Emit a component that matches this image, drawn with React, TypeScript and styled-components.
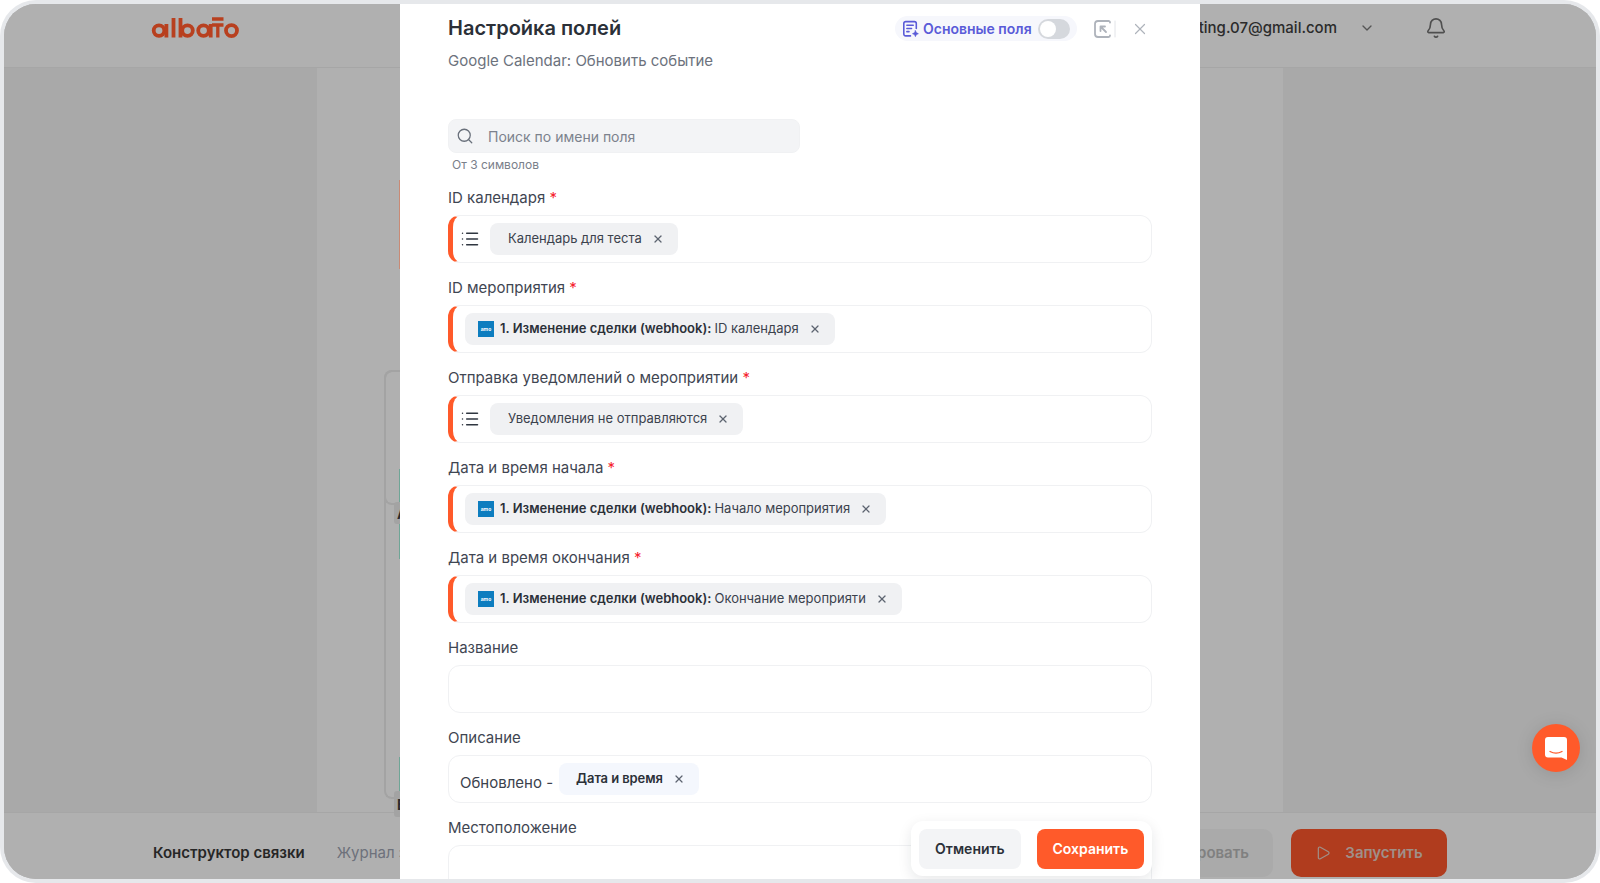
import React from "react";
import styled, { createGlobalStyle } from "styled-components";
import { Bell, ChevronDown, List, Play, Search, X } from "lucide-react";

const Global = createGlobalStyle`
  html, body { margin: 0; padding: 0; background: #fff; overflow: hidden; }
  * { box-sizing: border-box; }
  body { font-family: Inter, "Noto Sans", "Liberation Sans", sans-serif; }
`;

const Frame = styled.div`
  width: 1600px;
  height: 883px;
  padding: 4px;
  background: #e6e8eb;
  border-radius: 36px;
`;
const Screen = styled.div`
  position: relative;
  height: 875px;
  border-radius: 32px;
  overflow: hidden;
  background: #b0b0b0;
  display: flex;
  flex-direction: column;
`;
const TopBar = styled.header`
  height: 64px;
  flex: none;
  display: flex;
  align-items: center;
  justify-content: space-between;
  padding: 0 149px 16px 146px;
  border-bottom: 1px solid #a6a6a6;
  background: #b0b0b0;
`;
const UserBlock = styled.div`
  display: flex;
  align-items: center;
  color: #2b2b2b;
  font-size: 15px;
  font-weight: 500;
`;
const Chevron = styled(ChevronDown)`
  margin-left: 22px;
  color: #555;
`;
const BellIcon = styled(Bell)`
  margin-left: 50px;
  color: #4f4f4f;
`;
const Canvas = styled.main`
  flex: 1;
  display: flex;
`;
const SidePanel = styled.div`
  width: 313px;
  flex: none;
  background: #a9a9a9;
`;
const CenterPanel = styled.div`
  position: relative;
  flex: 1;
  background: #b0b0b0;
`;
const Connector = styled.div<{ $top: number; $height: number }>`
  position: absolute;
  left: 67px;
  top: ${(p) => p.$top}px;
  width: 30px;
  height: ${(p) => p.$height}px;
  border: 2px solid #a3a3a3;
  border-right: 0;
  border-radius: 8px 0 0 8px;
`;
const NodeTag = styled.div<{ $top: number; $height: number }>`
  position: absolute;
  left: 77px;
  top: ${(p) => p.$top}px;
  width: 20px;
  height: ${(p) => p.$height}px;
  padding-left: 3px;
  display: flex;
  align-items: center;
  background: #a3a3a3;
  border-radius: 3px 0 0 3px;
  color: #2b2b2b;
  font-size: 14px;
  font-weight: 700;
`;
const Edge = styled.div<{ $top: number; $height: number; $color: string }>`
  position: absolute;
  left: 82px;
  width: 1px;
  top: ${(p) => p.$top}px;
  height: ${(p) => p.$height}px;
  background: ${(p) => p.$color};
`;
const BottomBar = styled.footer`
  height: 67px;
  flex: none;
  display: flex;
  align-items: center;
  justify-content: space-between;
  padding: 13px 149px 0 149px;
  border-top: 1px solid #a6a6a6;
  background: #b0b0b0;
`;
const Tabs = styled.nav`
  display: flex;
  gap: 32px;
  font-size: 15px;
`;
const Tab = styled.span<{ $active?: boolean }>`
  color: ${(p) => (p.$active ? "#262626" : "#6d717b")};
  font-weight: ${(p) => (p.$active ? 600 : 400)};
`;
const BarActions = styled.div`
  display: flex;
  gap: 18px;
`;
const GhostButton = styled.div`
  height: 48px;
  width: 180px;
  display: flex;
  align-items: center;
  justify-content: flex-end;
  padding-right: 24px;
  border-radius: 10px;
  background: #aaaaaa;
  color: #808080;
  font-size: 15px;
  font-weight: 600;
`;
const RunButton = styled.div`
  height: 48px;
  width: 156px;
  display: flex;
  align-items: center;
  justify-content: center;
  gap: 14px;
  border-radius: 10px;
  background: #b03c1e;
  color: #a08f88;
  font-size: 15px;
  font-weight: 600;
`;
const ChatBubble = styled.div`
  position: absolute;
  left: 1528px;
  top: 720px;
  width: 48px;
  height: 48px;
  border-radius: 50%;
  background: #ff5a2a;
  box-shadow: 0 2px 18px rgba(0, 0, 0, 0.12);
  display: flex;
  align-items: center;
  justify-content: center;
`;

const Modal = styled.section`
  position: absolute;
  left: 396px;
  top: 0;
  bottom: 0;
  width: 800px;
  background: #fff;
  overflow: hidden;
  padding: 0 48px;
`;
const ModalHead = styled.div`
  display: flex;
  align-items: flex-start;
  justify-content: space-between;
  padding-top: 10px;
`;
const Title = styled.h1`
  margin: 0;
  font-size: 20px;
  line-height: 28px;
  font-weight: 600;
  color: #2b3038;
`;
const Subtitle = styled.div`
  margin-top: 7px;
  font-size: 15px;
  line-height: 24px;
  color: #6c727d;
`;
const HeadControls = styled.div`
  display: flex;
  align-items: center;
  padding-top: 2px;
  margin-right: 3px;
`;
const BasicPill = styled.div`
  height: 25px;
  width: 182px;
  display: flex;
  align-items: center;
  gap: 3px;
  padding: 0 7px 0 7px;
  border-radius: 13px;
  background: #f6f7fc;
  color: #5a5bd8;
  font-size: 14px;
  font-weight: 600;
  white-space: nowrap;
`;
const Toggle = styled.div`
  margin-left: auto;
  width: 32px;
  height: 20px;
  border-radius: 10px;
  background: #d5d8dd;
  padding: 2px;
  &::before {
    content: "";
    display: block;
    width: 16px;
    height: 16px;
    border-radius: 50%;
    background: #fff;
  }
`;
const IconSlot = styled.div`
  display: flex;
  align-items: center;
  margin-left: 17px;
  color: #aeb3bb;
`;
const CloseSlot = styled.div`
  display: flex;
  margin-left: 15px;
  color: #aeb3bb;
`;
const SearchBox = styled.div`
  margin-top: 46px;
  width: 352px;
  height: 34px;
  display: flex;
  align-items: center;
  gap: 14px;
  padding-left: 7px;
  border-radius: 8px;
  border: 1px solid #f0f1f3;
  background: #f3f4f6;
  color: #7c828d;
  font-size: 14px;
`;
const SearchGlyph = styled(Search)`
  color: #69707b;
`;
const Hint = styled.div`
  margin: 4px 0 13px 4px;
  font-size: 12px;
  line-height: 16px;
  color: #7a808a;
`;
const Fields = styled.div`
  display: flex;
  flex-direction: column;
  gap: 13px;
`;
const Label = styled.label`
  display: block;
  height: 24px;
  margin-bottom: 5px;
  font-size: 15px;
  line-height: 24px;
  color: #3f4652;
`;
const Required = styled.span`
  color: #f5222d;
`;
const Box = styled.div<{ $required?: boolean }>`
  height: 48px;
  display: flex;
  align-items: center;
  border: 1px solid #f0f1f3;
  border-left: ${(p) => (p.$required ? "5px solid #ff5a2a" : "1px solid #f0f1f3")};
  border-radius: 12px;
  padding-left: ${(p) => (p.$required ? "12px" : "11px")};
  color: #3b424d;
  font-size: 15px;
`;
const ListGlyph = styled(List)`
  margin: 0 10px 0 -5px;
  color: #2f3640;
`;
const Chip = styled.div<{ $tone?: "gray" | "blue"; $pad: number }>`
  height: 32px;
  display: inline-flex;
  align-items: center;
  padding: 0 14px 2px ${(p) => p.$pad}px;
  border-radius: 8px;
  background: ${(p) => (p.$tone === "blue" ? "#f4f7fd" : "#f0f1f3")};
  font-size: 13px;
  color: #3b424d;
  white-space: nowrap;
`;
const ChipBold = styled.b`
  font-weight: 600;
  margin-right: 3px;
  color: #2b3038;
`;
const ChipStrong = styled.span`
  font-weight: 600;
  letter-spacing: -0.1px;
  color: #2b3038;
`;
const ChipX = styled(X)`
  margin: 2px 0 0 10px;
  color: #5d6470;
`;
const AmoMark = styled.span`
  width: 16px;
  height: 16px;
  margin: 2px 6px 0 0;
  flex: none;
  display: flex;
  align-items: center;
  justify-content: center;
  background: #0d7dbf;
  color: #fff;
  font-size: 5px;
  font-weight: 700;
`;
const LeadText = styled.span`
  margin-right: 6px;
  padding-top: 6px;
`;
const ActionBar = styled.div`
  position: absolute;
  right: 48px;
  bottom: 3px;
  width: 241px;
  height: 55px;
  display: flex;
  gap: 16px;
  padding: 8px 8px 7px;
  border-radius: 12px;
  background: #fff;
  box-shadow: 0 4px 14px rgba(20, 25, 35, 0.1);
`;
const CancelButton = styled.button`
  flex: 101 0 0;
  border: 0;
  border-radius: 8px;
  padding-bottom: 2px;
  background: #f3f4f6;
  color: #2b3038;
  font: 600 14px Inter, sans-serif;
`;
const SaveButton = styled.button`
  flex: 107 0 0;
  border: 0;
  border-radius: 8px;
  padding-bottom: 2px;
  background: #ff5a2a;
  color: #fff;
  font: 600 14px Inter, sans-serif;
`;

const Logo = () => (
  <svg width="92" height="22" viewBox="150 17 92 22" fill="none" stroke="#b8401f" strokeWidth="3.8" aria-label="albato">
    <circle cx="159" cy="30.6" r="5.3" />
    <path d="M166.400 24v13.500" />
    <path d="M173.500 18v19.500" />
    <path d="M180.500 18v19.500" />
    <circle cx="187.500" cy="30.6" r="5.300" />
    <circle cx="203.500" cy="30.6" r="5.300" />
    <path d="M210.700 24v13.500" />
    <path d="M212 19h11.500M212 25h11.500M217.800 25v12.500" strokeWidth="3.300" />
    <circle cx="231.500" cy="30.6" r="5.500" />
  </svg>
);

const BasicIcon = () => (
  <svg width="18" height="18" viewBox="0 0 17 17" fill="none" stroke="#5a5bd8" strokeWidth="1.5" strokeLinecap="round" strokeLinejoin="round">
    <path d="M8 15H3.500A1.800 1.800 0 0 1 1.700 13.200V3.300A1.800 1.800 0 0 1 3.500 1.500h8.200a1.800 1.800 0 0 1 1.800 1.800V8" />
    <path d="M4.600 5h6M4.600 8h4.400M4.600 11h2" />
    <path d="M12.700 10.200l.8 1.900 1.900.8-1.900.8-.8 1.900-.8-1.900-1.900-.8 1.900-.8z" fill="#5a5bd8" strokeWidth="0.8" />
  </svg>
);

const CollapseIcon = () => (
  <svg width="22" height="18" viewBox="0 0 22 18" fill="none" stroke="#aeb3bb" strokeLinecap="round" strokeLinejoin="round">
    <path d="M16 2.600V2.500A1.500 1.500 0 0 0 14.500 1H4A3 3 0 0 0 1 4v10a3 3 0 0 0 3 3h10.500A1.500 1.500 0 0 0 16 15.500" strokeWidth="1.800" />
    <path d="M12 12L6.500 6.500M6.500 11V6.500H11" strokeWidth="1.800" />
    <path d="M21 1v16" strokeWidth="1" stroke="#e2e4e8" />
  </svg>
);

const ChatIcon = () => (
  <svg width="24" height="25" viewBox="0 0 24 25" fill="none">
    <path d="M4 1h16a3 3 0 0 1 3 3v20l-5.500-2.500H4a3 3 0 0 1-3-3V4a3 3 0 0 1 3-3z" fill="#fff" />
    <path d="M6 15.500c3.500 2 8.500 2 12 0" stroke="#ff5a2a" strokeWidth="1.300" strokeLinecap="round" />
  </svg>
);

type Field = {
  label: string;
  required?: boolean;
  list?: string;
  mapped?: string;
};

const fields: Field[] = [
  { label: "ID календаря", required: true, list: "Календарь для теста" },
  { label: "ID мероприятия", required: true, mapped: "ID календаря" },
  { label: "Отправка уведомлений о мероприятии", required: true, list: "Уведомления не отправляются" },
  { label: "Дата и время начала", required: true, mapped: "Начало мероприятия" },
  { label: "Дата и время окончания", required: true, mapped: "Окончание мероприяти" },
  { label: "Название" },
];

const FieldRow = ({ field }: { field: Field }) => (
  <div>
    <Label>
      {field.label}
      {field.required && <Required> *</Required>}
    </Label>
    <Box $required={field.required}>
      {field.list && (
        <>
          <ListGlyph size={20} strokeWidth={1.8} />
          <Chip $pad={18}>
            {field.list}
            <ChipX size={12} strokeWidth={2.5} />
          </Chip>
        </>
      )}
      {field.mapped && (
        <Chip $pad={13}>
          <AmoMark>amo</AmoMark>
          <ChipBold>1. Изменение сделки (webhook):</ChipBold>
          {field.mapped}
          <ChipX size={12} strokeWidth={2.5} />
        </Chip>
      )}
    </Box>
  </div>
);

export default function App() {
  return (
    <Frame>
      <Global />
      <Screen>
        <TopBar>
          <Logo />
          <UserBlock>
            marketing.07@gmail.com
            <Chevron size={16} strokeWidth={2} />
            <BellIcon size={22} strokeWidth={1.8} />
          </UserBlock>
        </TopBar>
        <Canvas>
          <SidePanel />
          <CenterPanel>
            <Edge $top={112} $height={89} $color="#c98a75" />
            <Connector $top={302} $height={135} />
            <Connector $top={302} $height={429} />
            <Edge $top={401} $height={90} $color="#6fa596" />
            <Edge $top={689} $height={34} $color="#6fa596" />
            <NodeTag $top={434} $height={22}>А</NodeTag>
            <NodeTag $top={723} $height={26}>Б</NodeTag>
          </CenterPanel>
          <SidePanel />
        </Canvas>
        <BottomBar>
          <Tabs>
            <Tab $active>Конструктор связки</Tab>
            <Tab>Журнал запусков</Tab>
          </Tabs>
          <BarActions>
            <GhostButton>Тестировать</GhostButton>
            <RunButton>
              <Play size={16} strokeWidth={1.8} />
              Запустить
            </RunButton>
          </BarActions>
        </BottomBar>
        <ChatBubble>
          <ChatIcon />
        </ChatBubble>
        <Modal>
          <ModalHead>
            <Title>Настройка полей</Title>
            <HeadControls>
              <BasicPill>
                <BasicIcon />
                Основные поля
                <Toggle />
              </BasicPill>
              <IconSlot>
                <CollapseIcon />
              </IconSlot>
              <CloseSlot>
                <X size={18} strokeWidth={1.6} />
              </CloseSlot>
            </HeadControls>
          </ModalHead>
          <Subtitle>Google Calendar: Обновить событие</Subtitle>
          <SearchBox>
            <SearchGlyph size={18} strokeWidth={1.7} />
            Поиск по имени поля
          </SearchBox>
          <Hint>От 3 символов</Hint>
          <Fields>
            {fields.map((f) => (
              <FieldRow key={f.label} field={f} />
            ))}
            <div>
              <Label>Описание</Label>
              <Box>
                <LeadText>Обновлено -</LeadText>
                <Chip $pad={17} $tone="blue">
                  <ChipStrong>Дата и время</ChipStrong>
                  <ChipX size={12} strokeWidth={2.5} />
                </Chip>
              </Box>
            </div>
            <div>
              <Label>Местоположение</Label>
              <Box />
            </div>
          </Fields>
          <ActionBar>
            <CancelButton>Отменить</CancelButton>
            <SaveButton>Сохранить</SaveButton>
          </ActionBar>
        </Modal>
      </Screen>
    </Frame>
  );
}
